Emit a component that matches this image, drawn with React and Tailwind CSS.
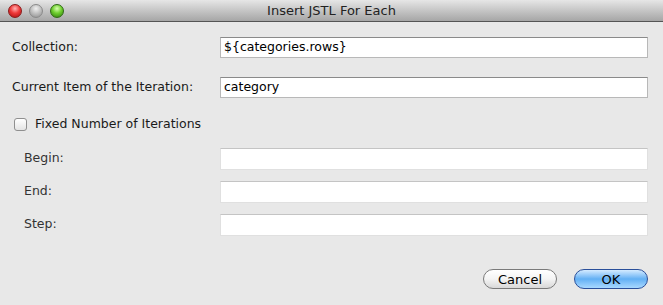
import React from 'react';

const Light = ({ color }) => {
  const fills = {
    red: 'bg-[radial-gradient(circle_at_50%_30%,#ffb3b3_0%,#ef3a3a_45%,#a80d0d_100%)] border-[#8a1a1a]',
    gray: 'bg-[radial-gradient(circle_at_50%_30%,#f0f0f0_0%,#bdbdbd_50%,#8c8c8c_100%)] border-[#8a8a8a]',
    green: 'bg-[radial-gradient(circle_at_50%_30%,#d8ffb0_0%,#6fcf2f_45%,#2f7a0c_100%)] border-[#2f6a14]',
  };
  return <span className={`block w-[14px] h-[14px] rounded-full border ${fills[color]}`} />;
};

const Field = ({ value = '', disabled = false }) => (
  <div
    className={`w-[428px] bg-white flex items-center px-[3px] text-[12.5px] text-black border ${
      disabled ? 'h-[22px] border-[#e0e0e0] border-t-[#c4c4c4]' : 'h-[21px] border-[#b8b8b8] border-t-[#8a8a8a]'
    }`}
  >
    {value}
  </div>
);

export default function App() {
  return (
    <div className="w-[663px] h-[305px] bg-[#e8e8e8] flex flex-col font-['DejaVu_Sans',sans-serif] text-[12.5px] text-[#1a1a1a]">
      {/* title bar */}
      <div className="h-[22px] relative flex items-center justify-center bg-gradient-to-b from-[#e6e6e6] to-[#a6a6a6] border-b border-[#555]">
        <div className="absolute left-[8px] top-[4px] flex gap-[7px]">
          <Light color="red" />
          <Light color="gray" />
          <Light color="green" />
        </div>
        <span className="text-[13px] text-[#222]">Insert JSTL For Each</span>
      </div>

      <div className="flex flex-col pl-[12px] pr-[15px]">
        <div className="flex items-center justify-between mt-[15px]">
          <span>Collection:</span>
          <Field value="${categories.rows}" />
        </div>
        <div className="flex items-center justify-between mt-[19px]">
          <span>Current Item of the Iteration:</span>
          <Field value="category" />
        </div>
        <div className="flex items-center gap-[8px] mt-[17px] pl-[2px]">
          <span className="block w-[13px] h-[13px] rounded-[3px] border border-[#8f8f8f] bg-gradient-to-b from-white to-[#e4e4e4]" />
          <span>Fixed Number of Iterations</span>
        </div>
        <div className="flex flex-col gap-[11px] mt-[14px] pl-[12px]">
          {['Begin:', 'End:', 'Step:'].map((l) => (
            <div key={l} className="flex items-center justify-between">
              <span className="text-[#333]">{l}</span>
              <Field disabled />
            </div>
          ))}
        </div>
        <div className="flex justify-end gap-[17px] mt-[33px]">
          <button className="w-[74px] h-[20px] rounded-full border border-[#7a7a7a] bg-gradient-to-b from-white via-[#f4f4f4] to-[#d8d8d8] text-[13px] text-black">
            Cancel
          </button>
          <button className="w-[74px] h-[20px] rounded-full border border-[#2a4f9a] bg-gradient-to-b from-[#d4ebff] via-[#62b0f4] to-[#a8d8ff] text-[13px] text-black">
            OK
          </button>
        </div>
      </div>
    </div>
  );
}
